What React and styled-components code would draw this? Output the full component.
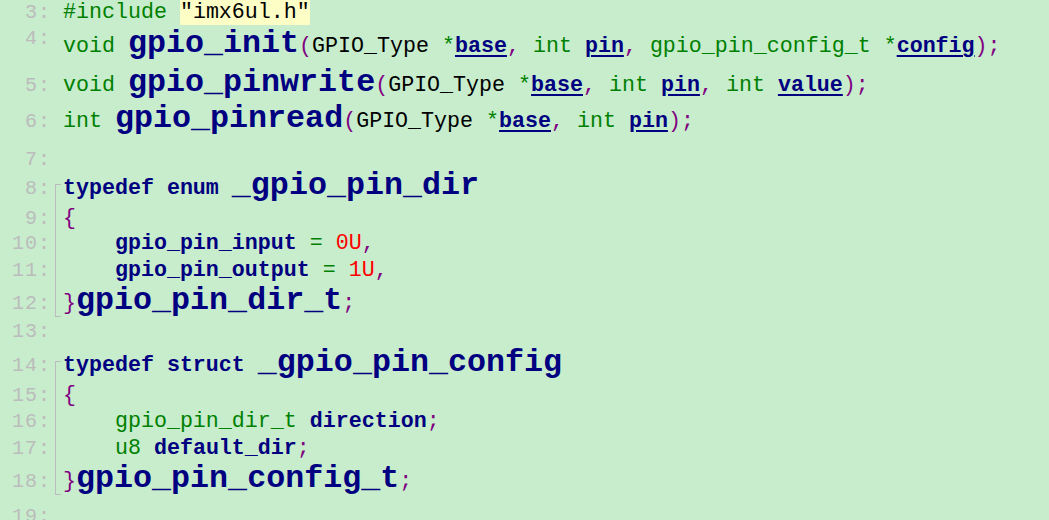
import styled, { createGlobalStyle, css } from 'styled-components'

const GlobalStyle = createGlobalStyle`
  html, body {
    margin: 0;
    padding: 0;
    background: #c7edcc;
    overflow: hidden;
  }
  body {
    width: 1049px;
    height: 520px;
  }
`

const Editor = styled.div`
  margin-top: -8px;
  font-family: "Liberation Mono", "DejaVu Sans Mono", monospace;
`

const Row = styled.div`
  display: flex;
  align-items: baseline;
  height: ${p => p.$h}px;
`

const LineNo = styled.span`
  flex: none;
  width: 51px;
  text-align: right;
  font-size: 20px;
  line-height: 1;
  letter-spacing: 1px;
  color: #bcbcbc;
  ${p => p.$raise && css`transform: translateY(-${p.$raise}px);`}
`

const foldLine = '1px solid #bdbdbd'

const Gutter = styled.span`
  flex: none;
  align-self: stretch;
  width: 12px;
  position: relative;

  &::before {
    content: '';
    position: absolute;
    left: 4px;
    width: 5px;
    border-left: ${foldLine};
    ${({ $fold }) => {
      if ($fold === 'start') return css`top: 16px; bottom: 0; border-top: ${foldLine};`
      if ($fold === 'mid') return css`top: 0; bottom: 0;`
      if ($fold === 'end') return css`top: 0; height: 33px; border-bottom: ${foldLine};`
      return css`display: none;`
    }}
  }
`

const Code = styled.span`
  display: block;
  flex: none;
  white-space: pre;
  font-size: 21.65px;
  line-height: 42.5px;
  color: #000;
`

const kinds = {
  kw: css`color: #008000;`,
  op: css`color: #008000;`,
  punc: css`color: #800080;`,
  num: css`color: #ff0000;`,
  id: css`color: #000080; font-weight: 700;`,
  param: css`
    color: #000080;
    font-weight: 700;
    text-decoration: underline;
    text-decoration-thickness: 1.5px;
    text-underline-offset: 3px;
  `,
  str: css`background: #fdfdc6;`,
  fn: css`
    color: #000080;
    font-weight: 700;
    font-size: 31.7px;
    line-height: 1;
  `,
}

const Tok = styled.span`
  ${p => kinds[p.$k]}
`

const t = (k, text) => [k, text]
const sp = ['', ' ']

const lines = [
  { n: 3, h: 34, code: [t('kw', '#include'), sp, t('str', '"imx6ul.h"')] },
  {
    n: 4, h: 39, raise: 8,
    code: [
      t('kw', 'void'), sp, t('fn', 'gpio_init'), t('punc', '('), t('', 'GPIO_Type'), sp,
      t('op', '*'), t('param', 'base'), t('punc', ','), sp, t('kw', 'int'), sp,
      t('param', 'pin'), t('punc', ','), sp, t('kw', 'gpio_pin_config_t'), sp,
      t('op', '*'), t('param', 'config'), t('punc', ');'),
    ],
  },
  {
    n: 5, h: 36,
    code: [
      t('kw', 'void'), sp, t('fn', 'gpio_pinwrite'), t('punc', '('), t('', 'GPIO_Type'), sp,
      t('op', '*'), t('param', 'base'), t('punc', ','), sp, t('kw', 'int'), sp,
      t('param', 'pin'), t('punc', ','), sp, t('kw', 'int'), sp,
      t('param', 'value'), t('punc', ');'),
    ],
  },
  {
    n: 6, h: 38,
    code: [
      t('kw', 'int'), sp, t('fn', 'gpio_pinread'), t('punc', '('), t('', 'GPIO_Type'), sp,
      t('op', '*'), t('param', 'base'), t('punc', ','), sp, t('kw', 'int'), sp,
      t('param', 'pin'), t('punc', ');'),
    ],
  },
  { n: 7, h: 29, code: [] },
  { n: 8, h: 30, fold: 'start', code: [t('id', 'typedef enum'), sp, t('fn', '_gpio_pin_dir')] },
  { n: 9, h: 25, fold: 'mid', code: [t('punc', '{')] },
  {
    n: 10, h: 27, fold: 'mid',
    code: [t('', '    '), t('id', 'gpio_pin_input'), sp, t('op', '='), sp, t('num', '0U'), t('punc', ',')],
  },
  {
    n: 11, h: 33, fold: 'mid',
    code: [t('', '    '), t('id', 'gpio_pin_output'), sp, t('op', '='), sp, t('num', '1U'), t('punc', ',')],
  },
  { n: 12, h: 28, fold: 'end', code: [t('punc', '}'), t('fn', 'gpio_pin_dir_t'), t('punc', ';')] },
  { n: 13, h: 34, code: [] },
  { n: 14, h: 30, fold: 'start', code: [t('id', 'typedef struct'), sp, t('fn', '_gpio_pin_config')] },
  { n: 15, h: 26, fold: 'mid', code: [t('punc', '{')] },
  {
    n: 16, h: 27, fold: 'mid',
    code: [t('', '    '), t('kw', 'gpio_pin_dir_t'), sp, t('id', 'direction'), t('punc', ';')],
  },
  {
    n: 17, h: 33, fold: 'mid',
    code: [t('', '    '), t('kw', 'u8'), sp, t('id', 'default_dir'), t('punc', ';')],
  },
  { n: 18, h: 35, fold: 'end', code: [t('punc', '}'), t('fn', 'gpio_pin_config_t'), t('punc', ';')] },
  { n: 19, h: 30, code: [] },
]

function Line({ line }) {
  return (
    <Row $h={line.h}>
      <LineNo $raise={line.raise}>{line.n}:</LineNo>
      <Gutter $fold={line.fold} />
      <Code>
        {line.code.length === 0
          ? '\u00a0'
          : line.code.map(([k, text], i) => <Tok key={i} $k={k}>{text}</Tok>)}
      </Code>
    </Row>
  )
}

export default function App() {
  return (
    <>
      <GlobalStyle />
      <Editor>
        {lines.map(line => <Line key={line.n} line={line} />)}
      </Editor>
    </>
  )
}
